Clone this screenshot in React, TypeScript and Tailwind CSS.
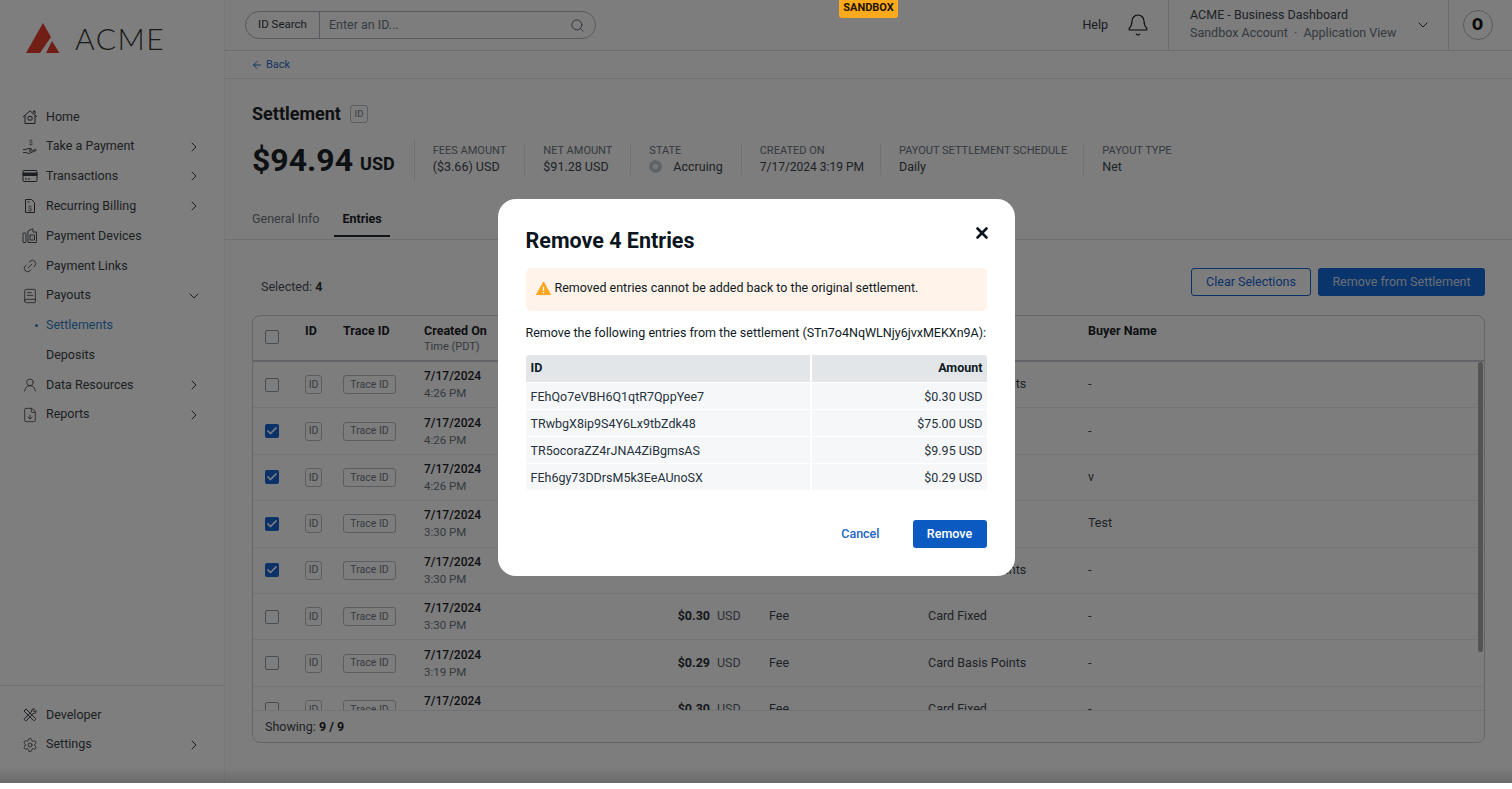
import {
  ArrowLeft,
  Bell,
  Check,
  ChevronDown,
  ChevronRight,
  FileDown,
  Link2,
  BookText,
  Search,
  Settings,
  UserRound,
  X,
} from "lucide-react";
import type { ReactNode } from "react";

const font = { fontFamily: "Roboto, 'Liberation Sans', sans-serif" };

function HomeIcon() {
  return (
    <svg viewBox="0 0 16 16" className="size-4" fill="none" stroke="currentColor" strokeWidth="1">
      <path d="M1 8 8 1.800 15 8M3 6.500V14.500h10V6.500M11.500 3.500V2h1.500v3" />
      <rect x="6" y="7.500" width="4" height="3.500" rx="0.500" />
    </svg>
  );
}

function HandIcon() {
  return (
    <svg viewBox="0 0 16 16" className="size-4" fill="none" stroke="currentColor" strokeWidth="0.9">
      <path d="M1 13.5h3l3 1 7-3c.6-.5 0-1.300-.8-1L9.500 12H7m-6-1.500h3l2-1h3c.8 0 .8 1.500 0 1.500H7" />
      <text x="7" y="6" fontSize="6.500" fill="currentColor" stroke="none">$</text>
    </svg>
  );
}

function CardIcon() {
  return (
    <svg viewBox="0 0 16 16" className="size-4" fill="none" stroke="currentColor" strokeWidth="1">
      <rect x="1" y="2.500" width="14" height="11" rx="1" />
      <path d="M1 5h14v2.500H1z" fill="currentColor" />
      <path d="M3 11h2M6 11h2" />
    </svg>
  );
}

function BillIcon() {
  return (
    <svg viewBox="0 0 16 16" className="size-4" fill="none" stroke="currentColor" strokeWidth="1">
      <path d="M3.500 1.500h6l3 3v10h-9z" />
      <path d="M5.500 4h2" />
      <text x="8" y="12.500" fontSize="7" textAnchor="middle" fill="currentColor" stroke="none">$</text>
    </svg>
  );
}

function DevicesIcon() {
  return (
    <svg viewBox="0 0 16 16" className="size-4" fill="none" stroke="currentColor" strokeWidth="0.9">
      <rect x="1" y="5" width="3" height="9.500" rx="0.500" />
      <path d="M6 14.500V3l4-2h1v3h3.500v10.500z" />
      <path d="M8 7h4.500v5H8zM10 9.500h.5" />
    </svg>
  );
}

function ToolsIcon() {
  return (
    <svg viewBox="0 0 16 16" className="size-4" fill="none" stroke="currentColor" strokeWidth="1">
      <path d="M2 4 4 2l9.500 9.500c.8.800-1.200 2.800-2 2z" />
      <path d="M14 3.500 12.500 5 11 3.500 12.500 2C10.500 1.300 9 3 9.500 5L2.500 11.500c-.9 1 1 2.900 2 2L11 6.500c2 .5 3.700-1 3-3z" />
    </svg>
  );
}

function AlertIcon() {
  return (
    <svg viewBox="0 0 16 16" className="size-[15px] shrink-0">
      <path d="M8 1 15.500 14.500H.5z" fill="#fba61f" stroke="#fba61f" strokeLinejoin="round" />
      <path d="M8 6v4.500M8 11.800v1.200" stroke="#fff" strokeWidth="1.400" />
    </svg>
  );
}

type NavItem = { label: string; icon?: ReactNode; chevron?: "right" | "down"; active?: boolean };

const nav: NavItem[] = [
  { label: "Home", icon: <HomeIcon /> },
  { label: "Take a Payment", icon: <HandIcon />, chevron: "right" },
  { label: "Transactions", icon: <CardIcon />, chevron: "right" },
  { label: "Recurring Billing", icon: <BillIcon />, chevron: "right" },
  { label: "Payment Devices", icon: <DevicesIcon /> },
  { label: "Payment Links", icon: <Link2 className="size-4 -rotate-45" strokeWidth={1.2} /> },
  { label: "Payouts", icon: <BookText className="size-4" strokeWidth={1.2} />, chevron: "down" },
  { label: "Settlements", active: true },
  { label: "Deposits" },
  { label: "Data Resources", icon: <UserRound className="size-4" strokeWidth={1.2} />, chevron: "right" },
  { label: "Reports", icon: <FileDown className="size-4" strokeWidth={1.2} />, chevron: "right" },
];

function NavRow({ item }: { item: NavItem }) {
  return (
    <div className="flex h-[29.800px] items-center pl-[22px] pr-[22px] text-[12.500px] text-[#3a3f44]">
      <span className="flex w-6 shrink-0 items-center">
        {item.icon}
        {item.active && <span className="ml-[13px] size-[3px] rounded-full bg-[#2f7fc4]" />}
      </span>
      <span className={item.active ? "text-[#2f7fc4]" : ""}>{item.label}</span>
      {item.chevron === "right" && <ChevronRight className="ml-auto size-4" strokeWidth={1.500} />}
      {item.chevron === "down" && <ChevronDown className="ml-auto size-4" strokeWidth={1.500} />}
    </div>
  );
}

function Sidebar() {
  return (
    <aside className="flex w-[225px] shrink-0 flex-col border-r border-[#f0f1f2] bg-[#fdfdfd]">
      <div className="flex h-[102px] items-start pl-[26px] pt-[23px]">
        <svg viewBox="0 0 34 30" className="h-[30px] w-[34px]">
          <path d="M0 30 17 0 25 14 14 30z" fill="#e03c2c" />
          <path d="M20 30 26 18 33.500 30z" fill="#e03c2c" />
        </svg>
        <span className="ml-[15px] text-[30px] font-light leading-[30px] tracking-[1.500px] text-[#333]" style={{ fontFamily: "Lato, sans-serif" }}>ACME</span>
      </div>
      <nav>
        {nav.map((n) => (
          <NavRow key={n.label} item={n} />
        ))}
      </nav>
      <div className="mt-auto h-[98px] border-t border-[#e2e5e8] pt-[14px]">
        <NavRow item={{ label: "Developer", icon: <ToolsIcon /> }} />
        <NavRow item={{ label: "Settings", icon: <Settings className="size-4" strokeWidth={1.2} />, chevron: "right" }} />
      </div>
    </aside>
  );
}

function Header() {
  return (
    <header className="flex h-[51px] shrink-0 items-center border-b border-[#d5d9dd] pl-5">
      <div className="flex h-[28px] w-[351px] shrink-0 items-center rounded-full border border-[#aeb6be] text-[#4a5560]">
        <span className="flex h-full w-[74px] items-center justify-center border-r border-[#aeb6be] text-[11.500px] text-[#33393f]">ID Search</span>
        <span className="pl-[9px] text-[12.500px] text-[#6d7884]">Enter an ID...</span>
        <Search className="ml-auto mr-[10px] size-[15px]" strokeWidth={1.300} />
      </div>
      <span className="ml-auto text-[12.500px] text-[#33393f]">Help</span>
      <Bell className="ml-[18px] size-[24px] text-[#111]" strokeWidth={1.100} />
      <div className="ml-[18px] flex h-full w-[281px] shrink-0 items-center border-l border-r border-[#d5d9dd] pl-[21px] pr-[17px]">
        <div className="pb-[2px] text-[12.500px] leading-[18.500px]">
          <div className="text-[#3d454d]">ACME - Business Dashboard</div>
          <div className="text-[#6a747e]">Sandbox Account &nbsp;·&nbsp; Application View</div>
        </div>
        <ChevronDown className="ml-auto size-4 text-[#33393f]" strokeWidth={1.500} />
      </div>
      <div className="flex w-[63px] shrink-0 items-center justify-center pr-[6px]">
        <span className="flex size-[30px] items-center justify-center rounded-full border border-[#aeb6be] text-[16px] font-black text-[#111]">O</span>
      </div>
    </header>
  );
}

function Stat({ label, value, icon, small, tight }: { label: string; value: string; icon?: boolean; small?: boolean; tight?: boolean }) {
  return (
    <div className={`-mt-[2px] flex h-[31px] flex-col justify-between border-r border-[#e2e5e8] pl-[18px] last:border-r-0 ${tight ? "pr-[16px]" : "pr-[18px]"}`}>
      <span className="text-[11px] leading-[14px] text-[#6a747e]">{label.toUpperCase()}</span>
      <span className={`flex items-center leading-[16px] text-[#3d454d] ${small ? "text-[12px]" : "text-[12.500px]"}`}>
        {icon && <span className="mr-[11px] flex size-[13px] items-center justify-center rounded-full bg-[#c3c9ce]"><span className="size-[5px] rounded-full bg-[#eef0f2]" /></span>}
        {value}
      </span>
    </div>
  );
}

const cellBtn = "flex h-[19px] items-center justify-center rounded-[3px] border border-[#b6bcc2] text-[10.500px] text-[#6f7880]";

type Row = { checked: boolean; time: string; amount?: string; type?: string; sub?: string; buyer: string };

// cells the dialog covers in the picture stay empty
const rows: Row[] = [
  { checked: false, time: "4:26 PM", sub: "Card Basis Points", buyer: "-" },
  { checked: true, time: "4:26 PM", buyer: "-" },
  { checked: true, time: "4:26 PM", buyer: "v" },
  { checked: true, time: "3:30 PM", buyer: "Test" },
  { checked: true, time: "3:30 PM", sub: "Card Basis Points", buyer: "-" },
  { checked: false, time: "3:30 PM", amount: "$0.30", type: "Fee", sub: "Card Fixed", buyer: "-" },
  { checked: false, time: "3:19 PM", amount: "$0.29", type: "Fee", sub: "Card Basis Points", buyer: "-" },
  { checked: false, time: "3:19 PM", amount: "$0.30", type: "Fee", sub: "Card Fixed", buyer: "-" },
];

const columns = "grid grid-cols-[40px_38px_81px_180px_106px_59px_159px_160px_1fr]";

function Checkbox({ checked }: { checked?: boolean }) {
  return checked ? (
    <span className="flex size-[14px] items-center justify-center rounded-[2px] bg-[#1464d2] text-white">
      <Check className="size-3" strokeWidth={3.500} />
    </span>
  ) : (
    <span className="block size-[14px] rounded-[2px] border border-[#8f98a1]" />
  );
}

function EntriesTable() {
  return (
    <div className="flex h-[428px] flex-col overflow-hidden rounded-lg border border-[#c9ced3]">
      <div className={`${columns} h-[46px] shrink-0 border-b-2 border-[#c4c9ce] pl-[12px] pt-[7px] text-[12.500px] font-bold leading-[16px] text-[#1c2227]`}>
        <span className="pt-[7px]"><Checkbox /></span>
        <span>ID</span>
        <span>Trace ID</span>
        <span className="flex flex-col">
          Created On
          <span className="text-[11px] font-normal leading-[15px] text-[#6a747e]">Time (PDT)</span>
        </span>
        <span />
        <span />
        <span />
        <span />
        <span>Buyer Name</span>
      </div>
      <div className="relative min-h-0 flex-1 overflow-hidden">
        {rows.map((r, i) => (
          <div key={i} className={`${columns} h-[46.400px] items-center border-b border-[#e8eaec] pl-[12px] text-[12.500px] text-[#3d454d]`}>
            <Checkbox checked={r.checked} />
            <span className={`${cellBtn} w-[17px]`}>ID</span>
            <span className={`${cellBtn} w-[53px]`}>Trace ID</span>
            <span className="flex flex-col pt-[1px] leading-[17px]">
              <span className="text-[12px] font-medium text-[#1c2227]">7/17/2024</span>
              <span className="text-[11.500px] text-[#6a747e]">{r.time}</span>
            </span>
            <span className="text-right font-bold text-[#2a3036]">{r.amount}</span>
            <span className="pl-[7px] text-[#5a646e]">{r.amount && "USD"}</span>
            <span>{r.type}</span>
            <span>{r.sub}</span>
            <span>{r.buyer}</span>
          </div>
        ))}
        <span className="absolute right-[1px] top-0 h-[290px] w-[5px] rounded-full bg-[#a8a8a8]" />
      </div>
      <div className="flex h-[32px] shrink-0 items-center border-t border-[#e2e5e8] pl-[12px] pt-[1px] text-[12.500px] text-[#3d454d]">
        Showing:&nbsp;<b className="font-bold text-[#1c2227]">9 / 9</b>
      </div>
    </div>
  );
}

function Main() {
  return (
    <main className="flex min-w-0 flex-1 flex-col bg-[#fafafa]">
      <Header />
      <div className="flex h-[28px] shrink-0 items-center gap-[3px] border-b border-[#dfe2e5] pl-[26px] pt-[1px] text-[11px] text-[#2b6cc4]">
        <ArrowLeft className="size-[12px]" strokeWidth={2} />
        Back
      </div>
      <div className="h-[161px] shrink-0 border-b border-[#dfe2e5] px-[27px]">
        <div className="flex items-center gap-[9px] pt-[24px]">
          <h1 className="text-[18px] font-bold leading-[22px] text-[#1c2227]">Settlement</h1>
          <span className="flex size-[18px] items-center justify-center rounded-[3px] border border-[#b6bcc2] text-[9.500px] text-[#6f7880]">ID</span>
        </div>
        <div className="mt-[14px] flex items-center">
          <div className="flex h-[42px] items-center border-r border-[#dfe2e5] pr-[19px] text-[#1c2227]">
            <span className="text-[32px] font-bold leading-none">$94.94</span>
            <span className="ml-[7px] mt-[7px] text-[18px] font-bold">USD</span>
          </div>
          <Stat label="Fees Amount" value="($3.66) USD" />
          <Stat label="Net Amount" value="$91.28 USD" />
          <Stat label="State" value="Accruing" icon />
          <Stat label="Created On" value="7/17/2024 3:19 PM" small tight />
          <Stat label="Payout Settlement Schedule" value="Daily" tight />
          <Stat label="Payout Type" value="Net" />
        </div>
        <div className="mt-[20px] flex gap-[15px] text-[12.500px]">
          <span className="h-[36px] pt-[9px] text-[#6a747e]">General Info</span>
          <span className="h-[36px] border-b-2 border-[#22282d] px-[8px] pt-[9px] font-bold text-[#1c2227]">Entries</span>
        </div>
      </div>
      <div className="px-[27px]">
        <div className="flex h-[75px] items-center pt-[9px]">
          <span className="pl-[9px] pt-[10px] text-[12.500px] text-[#4a5158]">Selected: <b className="font-bold text-[#2a3036]">4</b></span>
          <button className="ml-auto h-[28px] w-[120px] rounded-[3px] border border-[#1464d2] text-[12.500px] text-[#1464d2]">Clear Selections</button>
          <button className="ml-[7px] h-[28px] w-[167px] rounded-[3px] bg-[#1468d8] text-[12.500px] text-[#d5dfeb]">Remove from Settlement</button>
        </div>
        <EntriesTable />
      </div>
    </main>
  );
}

const removed = [
  ["FEhQo7eVBH6Q1qtR7QppYee7", "$0.30 USD"],
  ["TRwbgX8ip9S4Y6Lx9tbZdk48", "$75.00 USD"],
  ["TR5ocoraZZ4rJNA4ZiBgmsAS", "$9.95 USD"],
  ["FEh6gy73DDrsM5k3EeAUnoSX", "$0.29 USD"],
];

function Modal() {
  return (
    <div className="relative h-[377px] w-[517px] rounded-[18px] bg-white px-[28px] pt-[30px] text-[#0f1a24]">
      <h2 className="text-[21.500px] font-bold leading-[24px] text-[#0b1620]">Remove 4 Entries</h2>
      <X className="absolute right-[24px] top-[25px] size-[18px] text-[#0b1620]" strokeWidth={3.500} />
      <div className="mt-[15px] flex h-[43px] items-center gap-[4px] rounded-[5px] bg-[#fff3ea] pb-[2px] pl-[10px] text-[12.500px]">
        <AlertIcon />
        Removed entries cannot be added back to the original settlement.
      </div>
      <p className="mt-[14px] whitespace-nowrap text-[12.500px] leading-[16px]">Remove the following entries from the settlement (STn7o4NqWLNjy6jvxMEKXn9A):</p>
      <div className="mt-[13.500px] grid grid-cols-[284px_1fr] gap-x-[2px] gap-y-[1px] overflow-hidden rounded-[3px] text-[12.500px]">
        <span className="flex h-[27.500px] items-center bg-[#e3e6e9] pl-[5px] pt-[1px] font-bold">ID</span>
        <span className="flex h-[27.500px] items-center justify-end bg-[#e3e6e9] pr-[4px] pt-[1px] font-bold">Amount</span>
        {removed.map(([id, amount]) => (
          <div key={id} className="contents">
            <span className="flex h-[26px] items-center bg-[#f5f7f9] pl-[5px] pt-[2px] text-[#27323c]">{id}</span>
            <span className="flex h-[26px] items-center justify-end bg-[#f5f7f9] pr-[4px] pt-[2px] text-[#27323c]">{amount}</span>
          </div>
        ))}
      </div>
      <div className="mt-[30px] flex items-center justify-end gap-[33px] text-[12.500px]">
        <button className="font-medium text-[#1d64c4]">Cancel</button>
        <button className="h-[28px] w-[74px] rounded-[3px] bg-[#0b5ac1] font-medium text-white">Remove</button>
      </div>
    </div>
  );
}

export default function App() {
  return (
    <div className="h-[789px] w-[1512px] overflow-hidden bg-white" style={font}>
      <div className="relative flex h-[783px] overflow-hidden">
        <Sidebar />
        <Main />
        <div className="absolute inset-0 bg-black/50" />
        <div className="absolute inset-x-0 bottom-0 h-[16px] bg-gradient-to-t from-black/15 to-transparent" />
        <div className="absolute left-[839px] top-0 flex h-[18px] w-[59px] items-center justify-center rounded-b-[3px] bg-[#ffaa1c] pb-[1px] text-[11px] font-bold text-[#1c1400]">SANDBOX</div>
        <div className="absolute inset-0 flex justify-center pt-[199px]">
          <Modal />
        </div>
      </div>
    </div>
  );
}
